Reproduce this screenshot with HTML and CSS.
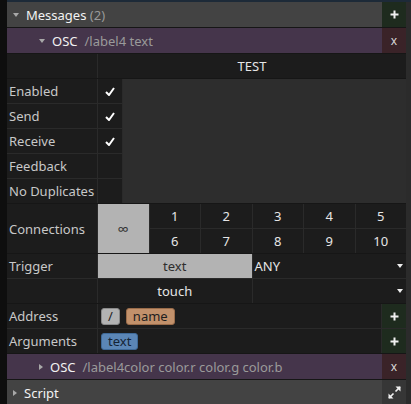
FILE: index.html
```html
<!DOCTYPE html>
<html>
	<head>
		<meta charset="UTF-8">
		<title>Messages</title>
		<link rel="stylesheet" href="styles.css">
	</head>
	<body>
		<div id="wrap">
		<div class="rail"></div>
		<div class="panel">
			<div class="head head-gray">
				<div class="title"><span class="tri down"></span><span class="name">Messages</span><span class="dim">&nbsp;(2)</span></div>
				<div class="btn btn-add"><svg width="9" height="9" viewBox="0 0 9 9"><path d="M4.5 0.5v8M0.5 4.5h8" stroke="#f0f0f0" stroke-width="2"/></svg></div>
			</div>
			<div class="head head-osc">
				<div class="title sub"><span class="tri down"></span><span class="name">OSC</span><span class="dim path">/label4 text</span></div>
				<div class="btn btn-del">x</div>
			</div>

			<div class="row row-wide">
				<div class="cell"></div>
				<div class="cell center">TEST</div>
			</div>

			<div class="flags">
				<div class="cell label">Enabled</div><div class="cell center"><svg class="check" width="10" height="9" viewBox="0 0 10 9"><path d="M1 5l3 3l5-7" fill="none" stroke="#fff" stroke-width="2"/></svg></div>
				<div class="filler"></div>
				<div class="cell label">Send</div><div class="cell center"><svg class="check" width="10" height="9" viewBox="0 0 10 9"><path d="M1 5l3 3l5-7" fill="none" stroke="#fff" stroke-width="2"/></svg></div>
				<div class="cell label">Receive</div><div class="cell center"><svg class="check" width="10" height="9" viewBox="0 0 10 9"><path d="M1 5l3 3l5-7" fill="none" stroke="#fff" stroke-width="2"/></svg></div>
				<div class="cell label">Feedback</div><div class="cell"></div>
				<div class="cell label">No Duplicates</div><div class="cell"></div>
			</div>

			<div class="conn">
				<div class="cell label tall">Connections</div>
				<div class="cell center tall on inf">&infin;</div>
				<div class="cell center">1</div>
				<div class="cell center">2</div>
				<div class="cell center">3</div>
				<div class="cell center">4</div>
				<div class="cell center">5</div>
				<div class="cell center">6</div>
				<div class="cell center">7</div>
				<div class="cell center">8</div>
				<div class="cell center">9</div>
				<div class="cell center">10</div>
			</div>

			<div class="trigger">
				<div class="cell label">Trigger</div>
				<div class="cell center on">text</div>
				<div class="cell select">ANY<span class="arrow"></span></div>
				<div class="cell"></div>
				<div class="cell center">touch</div>
				<div class="cell select"><span class="arrow"></span></div>
			</div>

			<div class="fields">
				<div class="cell label">Address</div>
				<div class="cell pills"><span class="pill pill-gray">/</span><span class="pill pill-tan">name</span></div>
				<div class="btn btn-add"><svg width="9" height="9" viewBox="0 0 9 9"><path d="M4.5 0.5v8M0.5 4.5h8" stroke="#f0f0f0" stroke-width="2"/></svg></div>
				<div class="cell label">Arguments</div>
				<div class="cell pills"><span class="pill pill-blue">text</span></div>
				<div class="btn btn-add"><svg width="9" height="9" viewBox="0 0 9 9"><path d="M4.5 0.5v8M0.5 4.5h8" stroke="#f0f0f0" stroke-width="2"/></svg></div>
			</div>

			<div class="head head-osc">
				<div class="title sub"><span class="tri right"></span><span class="name">OSC</span><span class="dim path">/label4color color.r color.g color.b</span></div>
				<div class="btn btn-del">x</div>
			</div>
			<div class="head head-gray">
				<div class="title"><span class="tri right"></span><span class="name">Script</span></div>
				<div class="btn btn-expand"><svg width="13" height="13" viewBox="0 0 13 13"><path d="M12 1L7.5 5.5M1 12l4.5-4.5" stroke="#f0f0f0" stroke-width="1.6"/><path d="M12.5 0.5v5l-5-5zM0.5 12.5v-5l5 5z" fill="#f0f0f0"/></svg></div>
			</div>
		</div>
		<div class="scroll"></div>
		</div>
	</body>
</html>
```

FILE: styles.css
```css
body{
	margin: 0;
	background: #2a2a2a;
	font-family: "Noto Sans", "Open Sans", sans-serif;
	font-size: 12px;
	color: #cfcfcf;
}
#wrap{
	display: flex;
	height: 404px;
	overflow: hidden;
}
.rail{
	width: 7px;
	background: #0e0e0e;
}
.scroll{
	flex: 1;
	background: #2b2b2b;
	border-top: 2px solid #1d2a38;
}
.panel{
	width: 399px;
	display: flex;
	flex-direction: column;
	gap: 1px;
	background: #161616;
	border-top: 2px solid #1d2a38;
}
.head{
	display: flex;
	height: 25px;
	flex-shrink: 0;
}
.head-gray{
	background: #434343;
}
.head-osc{
	background: #45354b;
}
.title{
	flex: 1;
	display: flex;
	align-items: center;
	padding-left: 6px;
	white-space: nowrap;
	overflow: hidden;
}
.title.sub{
	padding-left: 32px;
}
.name{
	color: #f2f2f2;
	font-size: 13px;
}
.dim{
	color: #9a9a9a;
	font-size: 13px;
}
.path{
	margin-left: 7px;
}
.tri{
	width: 0;
	height: 0;
	margin-right: 7px;
}
.tri.down{
	border-left: 3px solid transparent;
	border-right: 3px solid transparent;
	border-top: 4px solid #a8a8a8;
}
.tri.right{
	border-top: 3px solid transparent;
	border-bottom: 3px solid transparent;
	border-left: 4px solid #a8a8a8;
}
.btn{
	width: 24px;
	display: flex;
	align-items: center;
	justify-content: center;
}
.btn-add{
	background: #1e2b1e;
}
.btn-del{
	background: #3a2328;
	color: #d8d8d8;
	font-size: 12px;
}
.btn-expand{
	background: #363636;
}

/* property table */
.row, .flags, .conn, .trigger, .fields{
	display: grid;
	gap: 1px;
	background: #2a2a2a;
	flex-shrink: 0;
}
.cell{
	background: #1c1c1c;
	height: 24px;
	display: flex;
	align-items: center;
	white-space: nowrap;
}
.label{
	padding-left: 2px;
	color: #c8c8c8;
	font-size: 13px;
}
.center{
	justify-content: center;
	color: #e6e6e6;
	font-size: 13px;
}
.on{
	background: #b3b3b3;
	color: #2e2e2e;
}
.row-wide{
	grid-template-columns: 90px 1fr;
}
.flags{
	grid-template-columns: 90px 24px 1fr;
}
.filler{
	grid-column: 3;
	grid-row: 1 / span 5;
	background: #2d2d2d;
}
.conn{
	grid-template-columns: 90px repeat(6, 1fr);
}
.tall{
	grid-row: span 2;
	height: auto;
}
.inf{
	font-size: 16px;
	color: #333;
}
.trigger{
	grid-template-columns: 90px 1fr 1fr;
}
.select{
	padding-left: 2px;
	color: #e6e6e6;
	font-size: 13px;
	position: relative;
}
.arrow{
	position: absolute;
	right: 3px;
	top: 10px;
	border-left: 3px solid transparent;
	border-right: 3px solid transparent;
	border-top: 4px solid #eee;
}
.fields{
	grid-template-columns: 90px 1fr 24px;
}
.pills{
	padding-left: 3px;
	gap: 6px;
}
.pill{
	height: 15px;
	line-height: 15px;
	padding: 0 6px;
	border-radius: 3px;
	color: #1e1e1e;
	font-size: 13px;
}
.pill-gray{
	background: #b3b3b3;
	border: 1px solid #8a8a8a;
}
.pill-tan{
	background: #c2916b;
	border: 1px solid #9a6c4a;
}
.pill-blue{
	background: #5b86b6;
	border: 1px solid #3f6a98;
	color: #142436;
}
```
